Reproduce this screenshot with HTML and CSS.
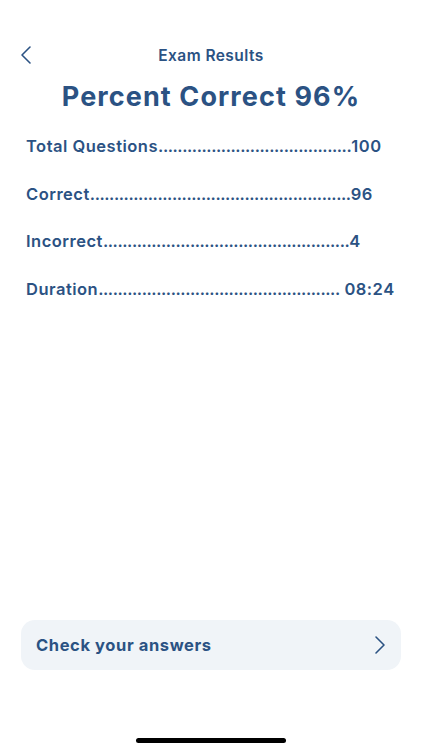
FILE: index.html
```html
<!DOCTYPE html>
<html>
<head>
<meta charset="utf-8">
<link rel="stylesheet" href="styles.css">
</head>
<body>
<div class="screen">
  <header class="nav">
    <svg class="back" width="14" height="20" viewBox="0 0 14 20"><path d="M11 2 L3 10 L11 18" fill="none" stroke="#2b5283" stroke-width="1.6" stroke-linecap="round" stroke-linejoin="round"/></svg>
    <div class="nav-title">Exam Results</div>
  </header>
  <h1 class="title">Percent Correct 96%</h1>
  <div class="stats">
    <div class="row"><span>Total Questions</span><span class="dots">........................................</span><span>100</span></div>
    <div class="row"><span>Correct</span><span class="dots">......................................................</span><span>96</span></div>
    <div class="row"><span>Incorrect</span><span class="dots">...................................................</span><span>4</span></div>
    <div class="row"><span>Duration</span><span class="dots">..................................................</span><span class="gap"> 08:24</span></div>
  </div>
  <div class="spacer"></div>
  <div class="check">
    <span class="check-label">Check your answers</span>
    <svg width="14" height="20" viewBox="0 0 14 20"><path d="M3 2 L11 10 L3 18" fill="none" stroke="#2b5283" stroke-width="1.6" stroke-linecap="round" stroke-linejoin="round"/></svg>
  </div>
  <div class="home-wrap"><div class="home"></div></div>
</div>
</body>
</html>
```
FILE: styles.css
```css
* { box-sizing: border-box; }
html, body { margin: 0; padding: 0; background: #fff; }
body { font-family: Inter, "Liberation Sans", sans-serif; color: #2b5283; }
.screen { width: 422px; height: 750px; display: flex; flex-direction: column; }
.nav { position: relative; height: 30px; margin-top: 40px; display: flex; align-items: center; justify-content: center; }
.back { position: absolute; left: 19px; top: 5px; }
.nav-title { font-size: 15.5px; font-weight: 600; letter-spacing: 0.45px; }
.title { margin: 10px 0 0; text-align: center; font-size: 27px; font-weight: 700; line-height: 34px; letter-spacing: 1.1px; }
.stats { margin-top: 9px; padding-left: 26px; display: flex; flex-direction: column; }
.row { font-size: 16.5px; font-weight: 600; line-height: 47.5px; white-space: nowrap; letter-spacing: 0.5px; }
.dots { letter-spacing: -0.43px; }
.spacer { flex: 1; }
.check { margin: 0 21px; height: 50px; border-radius: 14px; background: #f0f4f8; display: flex; align-items: center; justify-content: space-between; padding: 0 14px 0 15px; }
.check-label { font-size: 16.5px; font-weight: 700; letter-spacing: 0.6px; }
.home-wrap { height: 80px; display: flex; align-items: flex-end; justify-content: center; padding-bottom: 7px; }
.home { width: 150px; height: 5px; border-radius: 3px; background: #000; }
```
